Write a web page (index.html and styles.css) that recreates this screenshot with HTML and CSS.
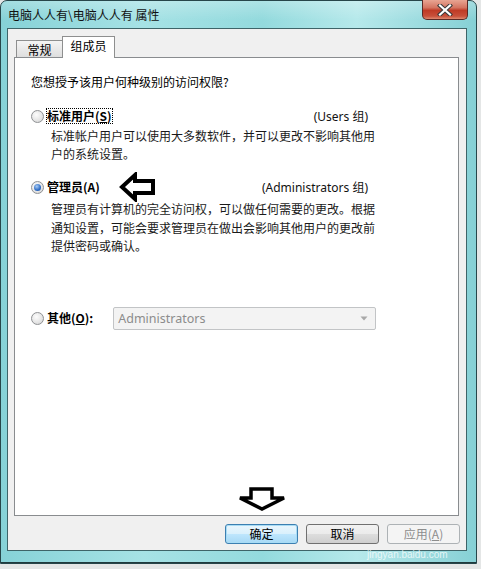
FILE: index.html
```html
<!DOCTYPE html>
<html lang="zh-CN">
<head>
<meta charset="utf-8">
<title>属性</title>
<link rel="stylesheet" href="styles.css">
</head>
<body>
<div class="window">
  <div class="titlebar">
    <span class="title">电脑人人有\电脑人人有 属性</span>
    <div class="close">
      <svg width="16" height="12" viewBox="0 0 16 12"><path d="M3 1.5 L13 10.5 M13 1.5 L3 10.5" stroke="#3a3a3a" stroke-width="4.2" stroke-linecap="square"/><path d="M3 1.5 L13 10.5 M13 1.5 L3 10.5" stroke="#ffffff" stroke-width="2.2" stroke-linecap="square"/></svg>
    </div>
  </div>
  <div class="body">
    <div class="tabarea">
      <div class="tabs">
        <div class="tab">常规</div>
        <div class="tab active">组成员</div>
      </div>
      <div class="panel">
        <p class="question">您想授予该用户何种级别的访问权限?</p>
        <div class="option first">
          <div class="opt-head">
            <span class="radio"></span>
            <span class="label focus">标准用户(<u>S</u>)</span>
            <span class="group">(Users 组)</span>
          </div>
          <p class="desc">标准帐户用户可以使用大多数软件，并可以更改不影响其他用<br>户的系统设置。</p>
        </div>
        <div class="option second">
          <div class="opt-head">
            <span class="radio checked"></span>
            <span class="label">管理员(A)</span>
            <span class="group">(Administrators 组)</span>
          </div>
          <p class="desc">管理员有计算机的完全访问权，可以做任何需要的更改。根据<br>通知设置，可能会要求管理员在做出会影响其他用户的更改前<br>提供密码或确认。</p>
        </div>
        <div class="other">
          <span class="radio"></span>
          <span class="label">其他(<u>O</u>):</span>
          <div class="combo">
            <span>Administrators</span>
            <svg width="8" height="5" viewBox="0 0 8 5"><path d="M0.5 0.5 L7.5 0.5 L4 4.5 Z" fill="#a8a8a8"/></svg>
          </div>
        </div>
      </div>
    </div>
    <div class="buttons">
      <div class="btn default">确定</div>
      <div class="btn">取消</div>
      <div class="btn disabled">应用(<u>A</u>)</div>
    </div>
  </div>
  <svg class="arrow-left" width="38" height="30" viewBox="0 0 38 30"><path d="M3 15 L16 3 L16 9 L34 9 L34 21 L16 21 L16 27 Z" fill="#fff" stroke="#000" stroke-width="4" stroke-linejoin="miter"/></svg>
  <svg class="arrow-down" width="50" height="24" viewBox="0 0 50 24"><path d="M14 2 L35 2 L35 11 L47 11 L25 22 L3 11 L14 11 Z" fill="#fff" stroke="#000" stroke-width="3.5" stroke-linejoin="miter"/></svg>
  <div class="watermark">jingyan.baidu.com</div>
</div>
</body>
</html>
```

FILE: styles.css
```css
html, body {
  margin: 0;
  padding: 0;
}
body {
  width: 481px;
  height: 569px;
  background: #e4e6e6;
  font-family: "Noto Sans", "Noto Sans CJK SC", sans-serif;
  font-size: 12px;
  color: #000;
  overflow: hidden;
}
.window {
  position: relative;
  width: 475px;
  height: 562px;
  border: 1px solid #27464a;
  border-radius: 7px 7px 0 0;
  background: linear-gradient(90deg, #86d2d7 0%, #a6e2e5 30%, #93dadd 55%, #b6e9eb 75%, #86d0d5 100%);
  box-shadow: inset 0 -6px 0 -5px #203a3d;
  display: flex;
  flex-direction: column;
}
.titlebar {
  height: 27px;
  display: flex;
  align-items: flex-start;
  background: linear-gradient(180deg, rgba(255,255,255,0.25), rgba(255,255,255,0) 70%);
  border-radius: 6px 6px 0 0;
}
.title {
  margin: 6px 0 0 7px;
  font-family: "Noto Sans CJK SC", sans-serif;
  font-size: 12px;
  line-height: 16px;
  color: #111;
}
.close {
  margin-left: auto;
  margin-right: 8px;
  margin-top: -1px;
  width: 44px;
  height: 19px;
  border: 1px solid #5a2a26;
  border-top: none;
  border-radius: 0 0 5px 5px;
  background: linear-gradient(180deg, #e8a593 0%, #d47561 40%, #bf3b26 55%, #c8503a 85%, #e08a70 100%);
  display: flex;
  align-items: center;
  justify-content: center;
}
.body {
  margin: 0 9px 0 6px;
  background: #f0f0f0;
  border: 1px solid #3e6468;
  display: flex;
  flex-direction: column;
}
.tabarea {
  margin: 7px 7px 0 6px;
}
.tabs {
  display: flex;
  align-items: flex-end;
  padding-left: 2px;
  height: 21px;
}
.tab {
  height: 17px;
  box-sizing: border-box;
  padding: 0 7px;
  border: 1px solid #8e8f8f;
  border-bottom: none;
  background: linear-gradient(180deg, #f4f4f4, #dedede);
  font-family: "Noto Sans CJK SC", sans-serif;
  font-size: 12px;
  line-height: 17px;
  width: 47px;
  text-align: center;
}
.tab.active {
  height: 22px;
  width: 53px;
  margin-left: -1px;
  margin-bottom: -1px;
  background: #fff;
  position: relative;
  line-height: 18px;
  padding: 0;
  text-align: center;
}
.panel {
  background: #fff;
  border: 1px solid #898c8f;
  padding: 15px 0 0 16px;
  box-sizing: border-box;
  height: 459px;
}
.question {
  margin: 0;
  line-height: 18px;
  font-family: "Noto Sans CJK SC", sans-serif;
}
.option.first { margin-top: 16px; }
.option.second { margin-top: 15px; }
.opt-head {
  display: flex;
  align-items: center;
  width: 337px;
  height: 18px;
}
.radio {
  width: 11px;
  height: 11px;
  border-radius: 50%;
  border: 1px solid #8f9194;
  background: radial-gradient(circle at 40% 35%, #fdfdfd 0%, #e6e6e6 55%, #cfcfcf 100%);
  box-sizing: content-box;
  flex: none;
  position: relative;
}
.radio.checked::after {
  content: "";
  position: absolute;
  left: 2px;
  top: 2px;
  width: 7px;
  height: 7px;
  border-radius: 50%;
  background: radial-gradient(circle at 40% 35%, #a9cdf5 0%, #2d6bc4 60%, #1d4f9e 100%);
}
.label {
  margin-left: 2px;
  font-family: "Noto Sans CJK SC", sans-serif;
  font-weight: bold;
  line-height: 16px;
  padding: 0 1px;
}
.label.focus {
  outline: 1px dotted #000;
  outline-offset: -1px;
}
.group {
  margin-left: auto;
  font-family: "Noto Sans", "Noto Sans CJK SC", sans-serif;
  color: #111;
}
.desc {
  margin: 2px 0 0 20px;
  line-height: 18px;
  font-family: "Noto Sans CJK SC", sans-serif;
  color: #1a1a1a;
}
.option.second .desc { margin-top: 4px; line-height: 18.5px; }
.other {
  margin-top: 51px;
  display: flex;
  align-items: center;
  height: 23px;
}
.other .label { margin-left: 2px; }
.combo {
  margin-left: 19px;
  width: 263px;
  height: 23px;
  box-sizing: border-box;
  border: 1px solid #c2c4c6;
  border-radius: 2px;
  background: #f3f3f3;
  display: flex;
  align-items: center;
  justify-content: space-between;
  padding: 0 7px 0 4px;
  color: #8c8c8c;
  font-family: "Noto Sans", sans-serif;
  font-size: 12.5px;
}
.buttons {
  display: flex;
  justify-content: flex-end;
  gap: 8px;
  margin: 8px 6px 6px 0;
}
.btn {
  width: 73px;
  height: 20px;
  box-sizing: border-box;
  border: 1px solid #707070;
  border-radius: 3px;
  background: linear-gradient(180deg, #f2f2f2 0%, #ebebeb 50%, #dddddd 51%, #cfcfcf 100%);
  text-align: center;
  line-height: 18px;
  font-family: "Noto Sans CJK SC", sans-serif;
  font-size: 12px;
}
.btn.default {
  border-color: #3c7fb1;
  background: linear-gradient(180deg, #eaf6fd 0%, #d9f0fc 50%, #bee6fd 51%, #a7d9f5 100%);
  box-shadow: inset 0 0 0 1px #a8dcf5;
}
.btn.disabled {
  color: #8d8d8d;
  border-color: #adb2b5;
  background: #f4f4f4;
}
.arrow-left {
  position: absolute;
  left: 118px;
  top: 171px;
}
.arrow-down {
  position: absolute;
  left: 236px;
  top: 486px;
}
.watermark {
  position: absolute;
  left: 366px;
  top: 548px;
  font-family: "Liberation Sans", sans-serif;
  font-size: 10px;
  line-height: 12px;
  color: rgba(255,255,255,0.75);
  pointer-events: none;
}
```
